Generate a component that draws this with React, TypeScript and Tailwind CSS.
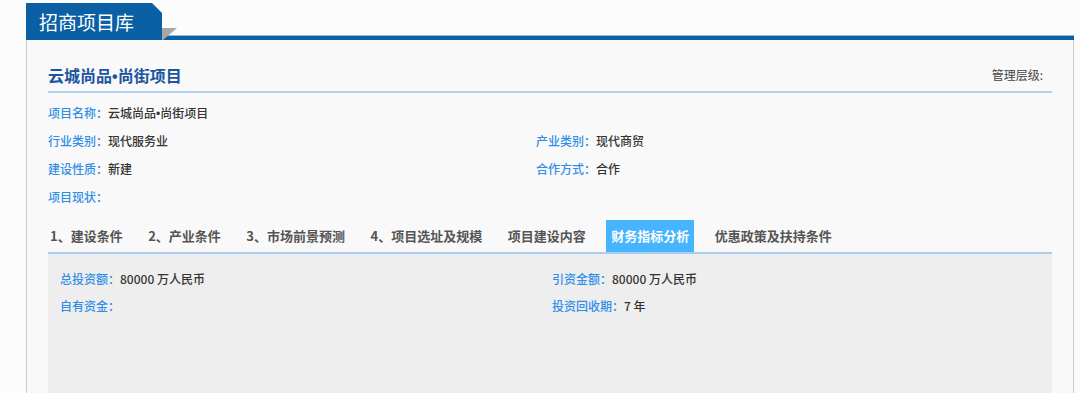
import React from "react";

const font = { fontFamily: '"Microsoft YaHei", "Noto Sans CJK SC", "Noto Sans", sans-serif' };

function Dot() {
  return <span className="font-['Liberation_Sans',sans-serif] leading-none">•</span>;
}

function Field({ label, value }: { label: string; value?: React.ReactNode }) {
  return (
    <div className="flex items-center h-[28px] text-[12px] leading-[16px] font-medium">
      <span className="text-[#2f8fe8]">{label}：</span>
      {value ? <span className="text-[#333333]">{value}</span> : null}
    </div>
  );
}

function CField({ label, value }: { label: string; value?: string }) {
  return (
    <div className="flex items-center h-[27px] text-[12px] leading-[16px] font-medium">
      <span className="text-[#2f8fe8]">{label}：</span>
      {value ? <span className="text-[#333333]">{value}</span> : null}
    </div>
  );
}

const tabs = [
  "1、建设条件",
  "2、产业条件",
  "3、市场前景预测",
  "4、项目选址及规模",
  "项目建设内容",
  "财务指标分析",
  "优惠政策及扶持条件",
];

export default function App() {
  return (
    <div className="w-[1080px] h-[393px] overflow-hidden bg-[#fcfcfc]" style={font}>
      {/* header */}
      <div className="flex items-end h-[40px] pt-[3px] ml-[26px] w-[1048px]">
        <div className="w-[136px] h-[37px] bg-[#0b5fa5] [clip-path:polygon(0_0,126px_0,136px_10px,136px_100%,0_100%)] flex items-center pl-[13px]">
          <span className="text-white text-[19px] leading-[24px]">招商项目库</span>
        </div>
        <div className="relative flex-1 h-[37px] flex flex-col justify-end">
          <div className="h-[5px] bg-[#0b5fa5] border-t border-[#8dbbe0]" />
          <svg className="absolute left-0 top-[25px]" width="15" height="12" viewBox="0 0 15 12">
            <polygon points="0,0 15,0 1,12 0,12" fill="#a8a8a8" />
          </svg>
        </div>
      </div>

      {/* panel */}
      <div className="ml-[26px] w-[1048px] h-[353px] border-l border-r border-[#cccccc] bg-[#f9f9f9] pl-[21px] pr-[21px]">
        <div className="flex items-center justify-between h-[53px] pt-[18px] border-b-[2px] border-[#b3d3f2]">
          <span className="text-[16px] leading-[24px] font-bold text-[#1b54a0]">
            云城尚品<Dot />尚街项目
          </span>
          <span className="text-[12px] leading-[16px] text-[#444444] mr-[9px]">管理层级:</span>
        </div>

        <div className="grid grid-cols-[488px_1fr] mt-[6px]">
          <Field label="项目名称" value={<>云城尚品<Dot />尚街项目</>} />
          <div />
          <Field label="行业类别" value="现代服务业" />
          <Field label="产业类别" value="现代商贸" />
          <Field label="建设性质" value="新建" />
          <Field label="合作方式" value="合作" />
          <Field label="项目现状" />
          <div />
        </div>

        <div className="mt-[9px] flex gap-[15.5px] -ml-[3px] h-[32px]">
          {tabs.map((t) => {
            const active = t === "财务指标分析";
            return (
              <div
                key={t}
                className={
                  active
                    ? "h-[32px] px-[5px] flex items-center bg-[#46b4fe] text-white text-[13px] font-bold leading-[16px]"
                    : "h-[32px] px-[5px] flex items-center text-[#555555] text-[13px] font-bold leading-[16px]"
                }
              >
                {t}
              </div>
            );
          })}
        </div>
        <div className="h-[2px] bg-[#a9cdef]" />

        <div className="bg-[#eeeeee] h-[160px] pl-[12px] pt-[11px]">
          <div className="grid grid-cols-[492px_1fr]">
            <CField label="总投资额" value="80000 万人民币" />
            <CField label="引资金额" value="80000 万人民币" />
            <CField label="自有资金" />
            <CField label="投资回收期" value="7 年" />
          </div>
        </div>
      </div>
    </div>
  );
}
